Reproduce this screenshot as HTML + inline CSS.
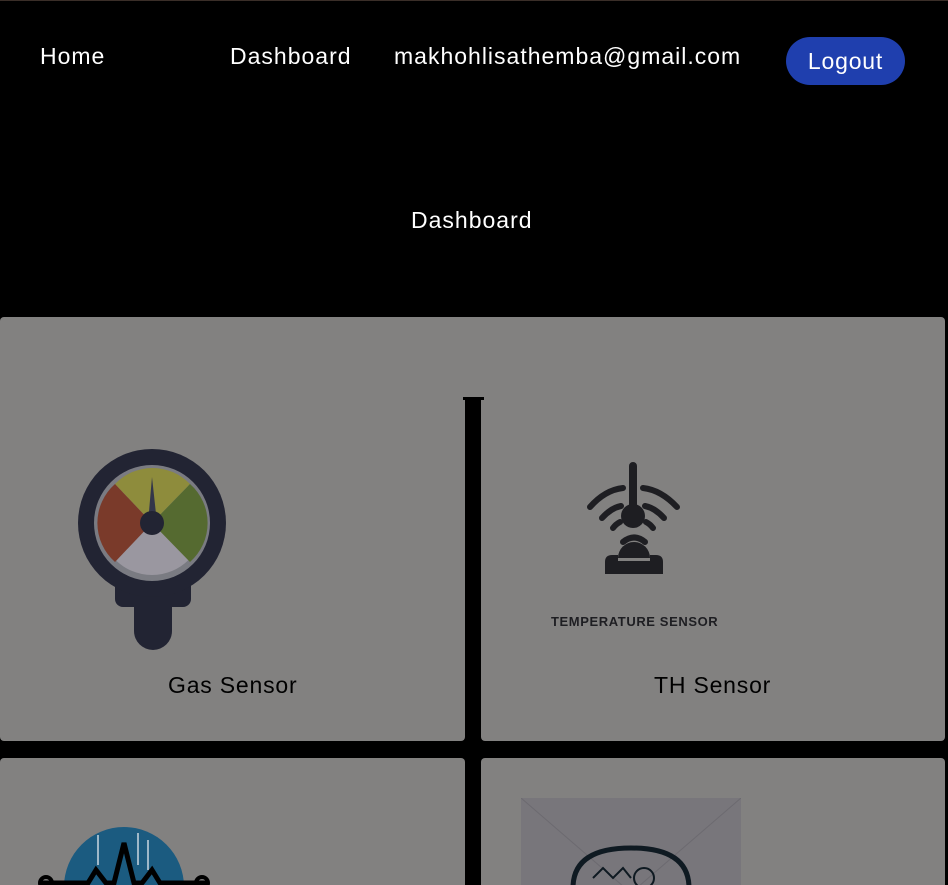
<!DOCTYPE html>
<html><head><style>
*{margin:0;padding:0;box-sizing:border-box}
html,body{width:948px;height:885px;overflow:hidden}
body{background:#000;font-family:"Liberation Sans",sans-serif;color:#fff;position:relative}
.t{position:absolute;font-size:23px;white-space:nowrap;letter-spacing:1px}
.card{position:absolute;background:#828180;border-radius:4px}
.lab{position:absolute;color:#000;font-size:23px;white-space:nowrap;letter-spacing:0.8px}
</style></head><body>
<div style="position:absolute;left:0;top:0;width:948px;height:1px;background:#3a2e28"></div>
<div class="t" style="left:40px;top:43px">Home</div>
<div class="t" style="left:230px;top:43px">Dashboard</div>
<div class="t" style="left:394px;top:43px">makhohlisathemba@gmail.com</div>
<div style="position:absolute;left:786px;top:37px;width:119px;height:48px;border-radius:24px;background:#1f3fae;color:#fff;font-size:23px;letter-spacing:0.8px;text-align:center;line-height:48px">Logout</div>
<div class="t" style="left:411px;top:207px">Dashboard</div>

<div class="card" style="left:0;top:317px;width:945px;height:82px;border-radius:4px 4px 0 0"></div>
<div class="card" style="left:0;top:397px;width:465px;height:344px;border-radius:0 0 4px 4px"></div>
<div class="card" style="left:481px;top:397px;width:464px;height:344px;border-radius:0 0 4px 4px"></div>
<div style="position:absolute;left:463px;top:397px;width:21px;height:3px;background:#000"></div>
<div class="card" style="left:0;top:758px;width:465px;height:127px;border-radius:4px 4px 0 0"></div>
<div class="card" style="left:481px;top:758px;width:464px;height:127px;border-radius:4px 4px 0 0"></div>

<svg style="position:absolute;left:78px;top:447px" width="150" height="205" viewBox="0 0 150 205">
<rect x="56" y="140" width="38" height="63" rx="19" fill="#222433"/>
<rect x="37" y="130" width="76" height="30" rx="8" fill="#222433"/>
<circle cx="74" cy="76" r="74" fill="#222433"/>
<circle cx="74" cy="76" r="58" fill="#7a7b82"/>
<circle cx="74" cy="76" r="52" fill="#9a97a0"/>
<path d="M74 76 L37 37 A52 52 0 0 1 112 37 Z" fill="#8e8c3c"/>
<path d="M74 76 L37 37 A52 52 0 0 0 37 115 Z" fill="#7a3a2a"/>
<path d="M74 76 L112 37 A52 52 0 0 1 112 115 Z" fill="#556a30"/>
<path d="M70 76 L74 30 L79 76 Z" fill="#33364a"/>
<circle cx="74" cy="76" r="12" fill="#222433"/>
</svg>

<svg style="position:absolute;left:585px;top:462px" width="98" height="114" viewBox="0 0 98 114">
<g fill="none" stroke="#1e1e22" stroke-width="6" stroke-linecap="round">
<path d="M5 45 Q20 28 38 26"/><path d="M58 26 Q76 28 92 45"/>
<path d="M17 56 Q26 46 36 44"/><path d="M60 44 Q70 46 79 56"/>
<path d="M28 66 Q31 62 35 60"/><path d="M61 60 Q65 62 68 66"/>
<path d="M38 80 Q49 71 60 80"/>
</g>
<rect x="44" y="0" width="8" height="64" rx="4" fill="#1e1e22"/>
<circle cx="48" cy="54" r="12" fill="#1e1e22"/>
<path d="M33 96 A16 16 0 0 1 65 96 Z" fill="#1e1e22"/>
<path d="M20 100 Q20 93 27 93 L33 93 L33 99 L65 99 L65 93 L71 93 Q78 93 78 100 L78 112 L20 112 Z" fill="#1e1e22"/>
</svg>
<div style="position:absolute;left:551px;top:614px;color:#1e1e22;font-size:13px;font-weight:bold;letter-spacing:0.6px">TEMPERATURE SENSOR</div>

<div class="lab" style="left:168px;top:672px">Gas Sensor</div>
<div class="lab" style="left:654px;top:672px">TH Sensor</div>

<svg style="position:absolute;left:38px;top:825px" width="172" height="60" viewBox="0 0 172 60">
<ellipse cx="86" cy="62" rx="60" ry="60" fill="#1b5b80"/>
<g stroke="#9fb8c8" stroke-width="2" fill="none"><path d="M60 10 L60 40"/><path d="M100 8 L100 40"/><path d="M110 15 L110 45"/></g>
<path d="M4 58 L50 58 L58 45 L68 58 L76 58 L86 18 L96 58 L104 58 L114 45 L122 58 L168 58" fill="none" stroke="#000" stroke-width="5"/>
<circle cx="8" cy="58" r="6" fill="none" stroke="#000" stroke-width="4"/>
<circle cx="164" cy="58" r="6" fill="none" stroke="#000" stroke-width="4"/>
</svg>

<div style="position:absolute;left:521px;top:798px;width:220px;height:87px;background:#78767b"></div>
<svg style="position:absolute;left:521px;top:798px" width="220" height="87">
<path d="M0 0 L110 95 L220 0" fill="none" stroke="#6c6a70" stroke-width="1"/>
<path d="M52 90 Q52 50 110 50 Q168 50 168 90" fill="none" stroke="#0f1a22" stroke-width="5"/>
<path d="M72 80 L82 70 L92 80 L102 70 L110 80" fill="none" stroke="#0f1a22" stroke-width="2"/>
<circle cx="123" cy="80" r="10" fill="none" stroke="#0f1a22" stroke-width="2"/>
</svg>
</body></html>
